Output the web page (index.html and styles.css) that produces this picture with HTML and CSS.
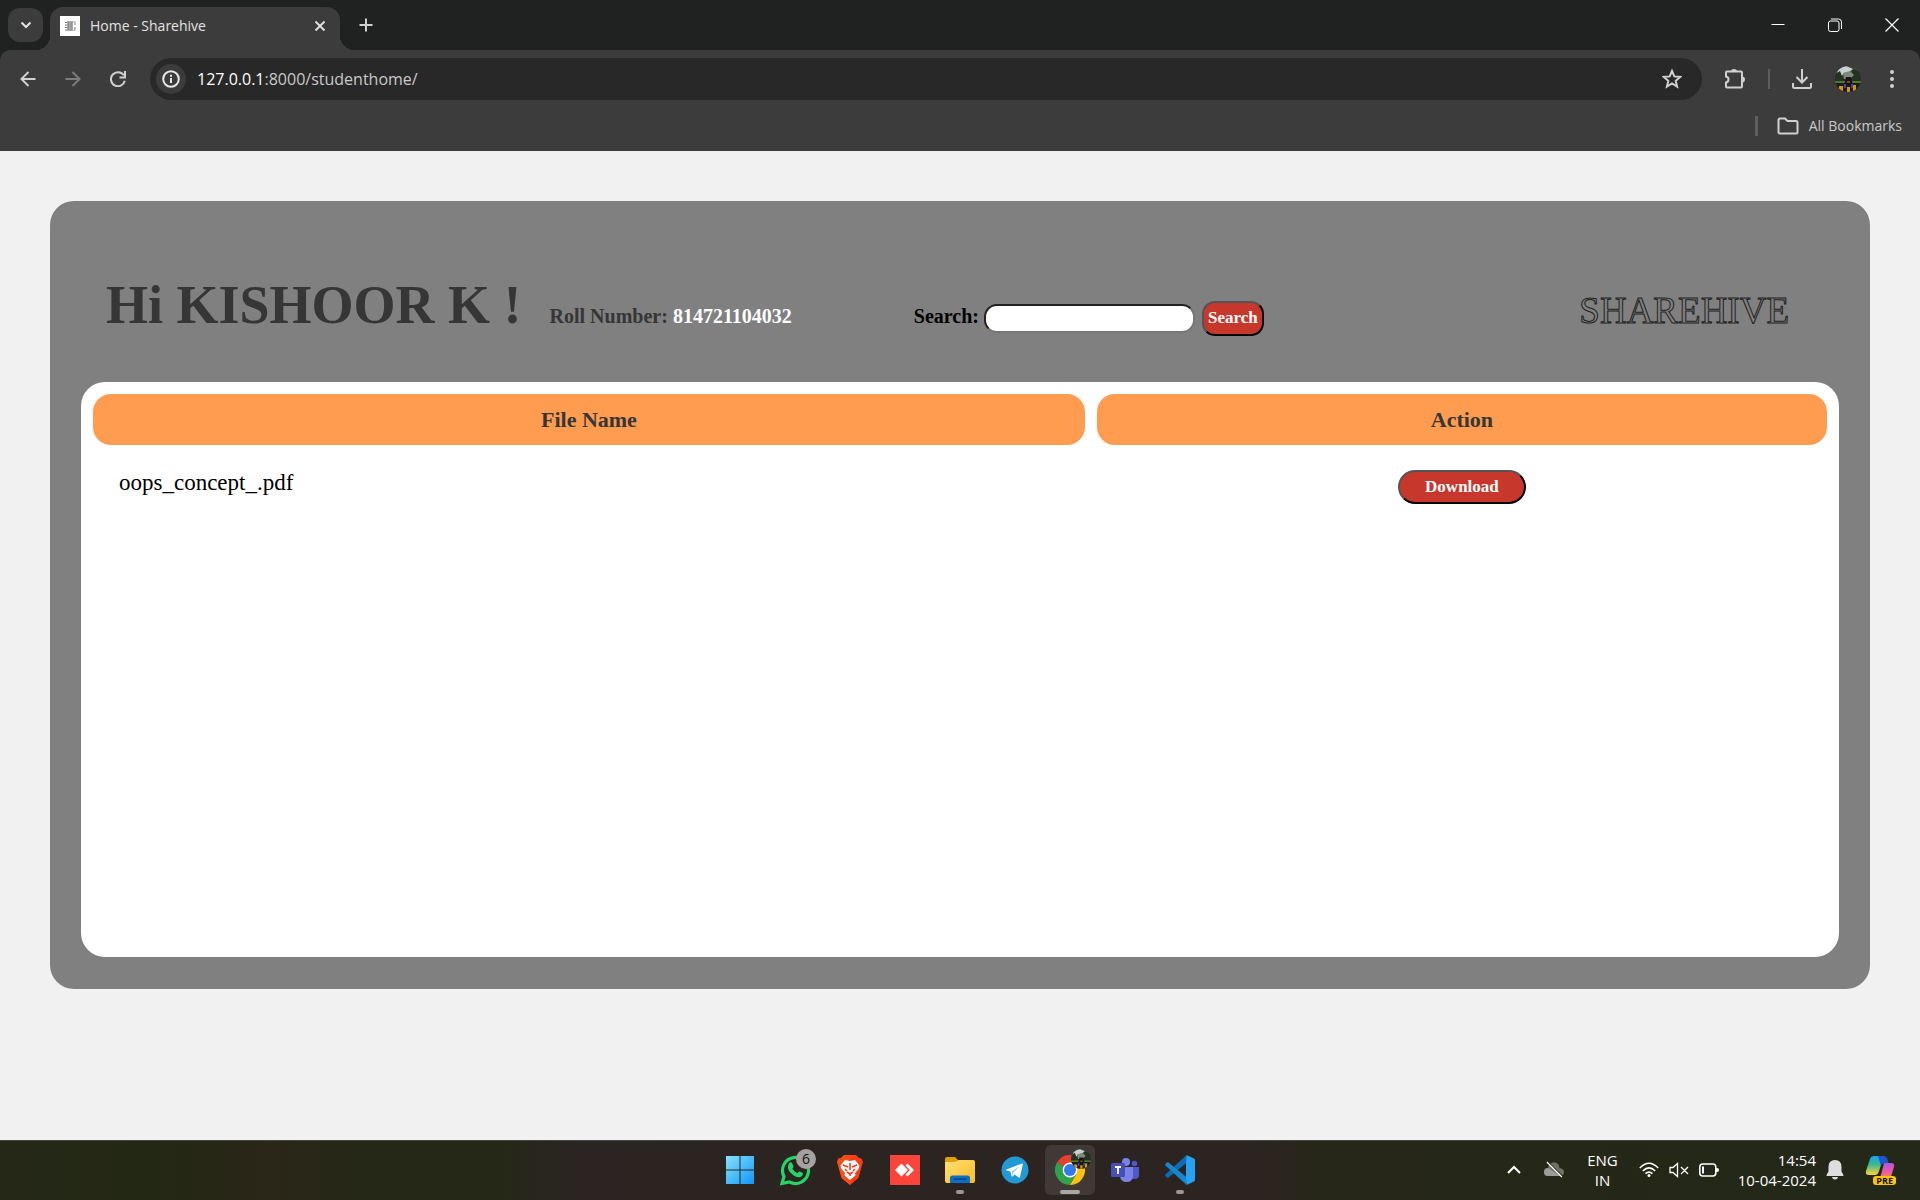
FILE: index.html
```html
<!DOCTYPE html>
<html lang="en">
<head>
<meta charset="utf-8">
<title>Home - Sharehive</title>
<link rel="stylesheet" href="styles.css">
</head>
<body>
<svg class="defs" width="0" height="0" aria-hidden="true">
  <defs>
    <symbol id="avatar" viewBox="0 0 26 26">
      <clipPath id="avatar-clip"><circle cx="13" cy="13" r="13"/></clipPath>
      <g clip-path="url(#avatar-clip)">
        <path fill="#3d4b38" d="M0 0h26v26H0z"/>
        <path fill="#c9d0d2" d="M3 2l8-2 7 3-4 3-5 1-3 4-5 1z"/>
        <path fill="#24331f" d="M0 8l5-3 2 5 5-1 1 6H0zM18 3l8 3v10h-9l-2-6z"/>
        <path fill="#7d8a7c" d="M8 7l7-2 4 4-4 4H9z"/>
        <path fill="#4f7a2c" d="M0 15h26v2H0z"/>
        <path fill="#1d1c22" d="M0 17h26v9H0z"/>
        <path fill="#17151a" d="M11 11h5l2 9H9z"/>
        <path fill="#90443a" d="M12 15h3v2h-3z"/>
        <path fill="#dc9210" d="M4 20h4v6H4zM12 21h3v5h-3zM18 19h3v6h-3z"/>
        <path fill="#374c9b" d="M9 18h2v4H9zM16 18h2v4h-2z"/>
      </g>
    </symbol>
  </defs>
</svg>

<header class="browser">
  <div class="tabstrip">
    <button class="tab-search" aria-label="Search tabs"><svg width="12" height="8" viewBox="0 0 12 8"><path d="M1.500 1.500L6 6l4.500-4.500" fill="none" stroke="#e3e3e3" stroke-width="2"/></svg></button>
    <div class="tab">
      <svg width="20" height="20" viewBox="0 0 20 20"><path fill="#fff" d="M0 0h20v20H0z"/><path fill="#aaa" d="M7 5h6v10H7z"/><path d="M5 6.500h2M5 9h2M5 11.500h2M5 14h2M13.500 6h2M13.500 14h2M15 7v2M15 11v2" stroke="#777" stroke-width="1"/><path d="M8.500 6v8M11 6v8" stroke="#888"/></svg>
      <span class="tab-title">Home - Sharehive</span>
      <button class="plain" aria-label="Close tab"><svg width="12" height="12" viewBox="0 0 12 12"><path d="M1.500 1.500l9 9M10.500 1.500l-9 9" stroke="#e3e3e3" stroke-width="1.800"/></svg></button>
    </div>
    <button class="plain new-tab" aria-label="New tab"><svg width="14" height="14" viewBox="0 0 14 14"><path d="M7 .5v13M.5 7h13" stroke="#d0d0d0" stroke-width="2"/></svg></button>
    <div class="window-controls">
      <button aria-label="Minimize"><svg width="14" height="14" viewBox="0 0 14 14"><path d="M.5 6.500h13" stroke="#fff"/></svg></button>
      <button aria-label="Restore"><svg width="14" height="14" viewBox="0 0 14 14" fill="none" stroke="#fff"><rect x=".5" y="3" width="10.500" height="10.500" rx="2"/><path d="M3 1h7.500a3 3 0 0 1 3 3v7"/></svg></button>
      <button aria-label="Close"><svg width="14" height="14" viewBox="0 0 14 14"><path d="M.5.5l13 13M13.500.5l-13 13" stroke="#fff" stroke-width="1.200"/></svg></button>
    </div>
  </div>
  <div class="toolbar">
    <div class="nav-row">
      <div class="nav-buttons">
        <button class="plain" aria-label="Back"><svg width="16" height="16" viewBox="0 0 16 16"><path d="M15.500 8H2M8.500 1L1.500 8l7 7" fill="none" stroke="#d0d0d0" stroke-width="2"/></svg></button>
        <button class="plain" aria-label="Forward" disabled><svg width="16" height="16" viewBox="0 0 16 16"><path d="M.5 8H14M7.500 1l7 7-7 7" fill="none" stroke="#7c7c7c" stroke-width="2"/></svg></button>
        <button class="plain" aria-label="Reload"><svg width="16" height="16" viewBox="0 0 16 16"><path d="M13.800 4.300A7 7 0 1 0 14.800 9.800" fill="none" stroke="#d0d0d0" stroke-width="2"/><path d="M15 0v6.500H9.500" fill="none" stroke="#d0d0d0" stroke-width="2"/></svg></button>
      </div>
      <div class="omnibox">
        <button class="site-info" aria-label="Site information"><svg width="18" height="18" viewBox="0 0 18 18"><circle cx="9" cy="9" r="7.800" fill="none" stroke="#e8e8e8" stroke-width="2"/><path d="M9 8v5M9 4.800v2" stroke="#e8e8e8" stroke-width="2"/></svg></button>
        <span class="url">127.0.0.1<span class="url-rest">:8000/studenthome/</span></span>
        <button class="plain" aria-label="Bookmark this tab"><svg width="20" height="20" viewBox="0 0 20 20"><path d="M10 1.900l2.300 5.500 5.900.5-4.500 3.900 1.400 5.800-5.100-3.100-5.100 3.100 1.400-5.800L1.800 7.900l5.900-.5z" fill="none" stroke="#d0d0d0" stroke-width="2"/></svg></button>
      </div>
      <div class="actions">
        <button class="plain" aria-label="Extensions"><svg width="22" height="22" viewBox="0 0 22 22"><path d="M2 4.500q0-1 1-1h14q1 0 1 1v14q0 1-1 1H3q-1 0-1-1v-4q2.500-.5 2.500-3T2 8.500z" fill="none" stroke="#d0d0d0" stroke-width="2"/><path fill="#d0d0d0" d="M7 3.500q0-2.500 3-2.500t3 2.500zM18 8.500q3 0 3 3t-3 3z"/></svg></button>
        <span class="divider"></span>
        <button class="plain" aria-label="Downloads"><svg width="20" height="20" viewBox="0 0 20 20"><path d="M10 0v13M4.500 8l5.500 5.500L15.500 8M1 14v3.500q0 1.500 1.500 1.500h15q1.500 0 1.500-1.500V14" fill="none" stroke="#d0d0d0" stroke-width="2"/></svg></button>
        <button class="plain" aria-label="Profile"><svg width="26" height="26"><use href="#avatar"/></svg></button>
        <button class="plain menu" aria-label="Menu"><svg width="4" height="18" viewBox="0 0 4 18" fill="#d0d0d0"><circle cx="2" cy="2" r="2"/><circle cx="2" cy="9" r="2"/><circle cx="2" cy="16" r="2"/></svg></button>
      </div>
    </div>
    <div class="bookmarks">
      <span class="divider thick"></span>
      <button class="plain all-bookmarks"><svg width="22" height="18" viewBox="0 0 22 18"><path d="M1.500 3q0-1.500 1.500-1.500h5l2.500 2.500H19q1.500 0 1.500 1.500V15q0 1.500-1.500 1.500H3q-1.500 0-1.500-1.500z" fill="none" stroke="#d0d0d0" stroke-width="2"/></svg>All Bookmarks</button>
    </div>
  </div>
</header>

<main class="page">
  <section class="card">
    <div class="card-head">
      <h1>Hi KISHOOR K !</h1>
      <p class="roll">Roll Number: <span>814721104032</span></p>
      <form class="search">
        <label for="q">Search:</label>
        <input id="q" type="text">
        <button class="red" type="button">Search</button>
      </form>
      <div class="logo">SHAREHIVE</div>
    </div>
    <div class="panel">
      <table>
        <thead><tr><th class="name-col">File Name</th><th>Action</th></tr></thead>
        <tbody><tr><td>oops_concept_.pdf</td><td class="action"><button class="red download">Download</button></td></tr></tbody>
      </table>
    </div>
  </section>
</main>

<footer class="taskbar">
  <nav class="apps">
    <button aria-label="Start"><svg width="30" height="30" viewBox="0 0 30 30"><defs><linearGradient id="win" gradientUnits="userSpaceOnUse" x1="0" y1="0" x2="30" y2="30"><stop stop-color="#8ce5ff"/><stop offset="1" stop-color="#0a93f5"/></linearGradient></defs><path fill="url(#win)" d="M1 1h13.500v13.500H1zM15.500 1H29v13.500H15.500zM1 15.500h13.500V29H1zM15.500 15.500H29V29H15.500z"/></svg></button>
    <button aria-label="WhatsApp"><svg width="32" height="32" viewBox="0 0 32 32"><path d="M3 29.500l2-7A13 13 0 1 1 10.500 28z" fill="none" stroke="#25d366" stroke-width="3.200"/><path d="M10 9.500q1.500-2 3-.5l1.500 3.300q.3 1-1.200 2.300 1.800 3.200 5 4.600 1.700-2 2.500-1.700l3 1.600q1 1-.8 3-3 2.800-8.300-.7Q9.500 17.800 9 14q-.3-2.500 1-4.500z" fill="#25d366"/></svg><span class="badge">6</span></button>
    <button aria-label="Brave"><svg width="26" height="30" viewBox="0 0 26 30"><path fill="#fb3b13" d="M7 0h12l3 3 2.500.5L26 7l-1 3-3.500 13L13 30l-8.500-7L1 10 0 7l1.500-3.500L4 3z"/><path fill="#ff5a1a" d="M7 0h6v30l-8.500-7L1 10 0 7l1.500-3.500L4 3z" opacity=".6"/><path fill="#fff" d="M8 5l5 1 5-1 4.500 5.500-1 3.500-3.500 4 .5 2.500L13 25l-5.500-4.500.5-2.500-3.500-4-1-3.500z"/><path d="M6 10l5 2M20 10l-5 2M13 8v7M10 17l3 2 3-2M8 14l2 2M18 14l-2 2M13 19v2" stroke="#fb3b13" stroke-width="1.600" fill="none"/></svg></button>
    <button aria-label="AnyDesk"><svg width="30" height="30" viewBox="0 0 30 30"><path fill="#fb443a" d="M0 0h30v30H0z"/><path fill="#fff" d="M5 15l6.500-6.500L18 15l-6.500 6.500zM15.500 10.500l2-2L24 15l-6.500 6.500-2-2L20 15z"/></svg></button>
    <button class="running" aria-label="File Explorer"><svg width="32" height="28" viewBox="0 0 32 28"><defs><linearGradient id="fold" x2="1" y2="1"><stop stop-color="#ffe07a"/><stop offset="1" stop-color="#fcbc25"/></linearGradient></defs><path fill="#e0a008" d="M1 3q0-2 2-2h8l4 4h8v8H1z"/><path fill="url(#fold)" d="M1 6h10l4-2h14q2 0 2 2v19q0 2-2 2H3q-2 0-2-2z"/><path fill="#0b6fc4" d="M6 27v-5q0-2.500 2.500-2.500h15Q26 19.500 26 22v5z"/><path d="M10 23h12" stroke="#07437e" stroke-width="1.500"/></svg></button>
    <button aria-label="Telegram"><svg width="28" height="28" viewBox="0 0 28 28"><circle cx="14" cy="14" r="13.500" fill="#2199d4"/><path fill="#fff" d="M5.500 13.500L21 7.500q1-.2.800 1L19 21q-.3 1-1.300.5l-4-3-2.200 2q-.6.500-.9-.5l-1.300-4.500-3.800-1q-1-.4 0-1z"/><path fill="#9bcbe8" d="M10.500 15.500l7.800-5-6.300 6.500-.8 3.500z"/></svg></button>
    <button class="running active" aria-label="Google Chrome"><svg width="30" height="30" viewBox="0 0 30 30"><path fill="#e8402f" d="M15 15L2 7.500A15 15 0 0 1 28 7.500z"/><path fill="#2fa24c" d="M15 15L2 7.500A15 15 0 0 0 15 30l6.500-11z"/><path fill="#fdc20f" d="M15 15V7.500h13A15 15 0 0 1 15 30l6.500-11z"/><circle cx="15" cy="15" r="7.400" fill="#fff"/><circle cx="15" cy="15" r="6" fill="#3079ee"/></svg><svg class="profile-badge" width="20" height="20"><use href="#avatar"/></svg></button>
    <button aria-label="Teams"><svg width="28" height="26" viewBox="0 0 28 26"><circle cx="15" cy="5" r="4" fill="#7b83eb"/><circle cx="23.500" cy="6.500" r="2.800" fill="#5059c9"/><path fill="#5059c9" d="M19 10h9v8q0 4-4.500 4T19 18z"/><path fill="#7b83eb" d="M9 10h13v9q-.5 6-6.500 6T9 19z"/><rect x="0" y="6" width="14" height="14" rx="1.500" fill="#464eb8"/><path d="M4 10h6M7 10v7" stroke="#fff" stroke-width="1.800"/></svg></button>
    <button class="running" aria-label="Visual Studio Code"><svg width="30" height="30" viewBox="0 0 30 30"><path fill="#0b6db5" d="M22 7.500L3.500 22.500q-1 .6-1.700-.2L.5 21q-.7-1 .2-1.800L21 .5z"/><path fill="#1686cf" d="M22 22.500L3.500 7.500q-1-.6-1.700.2L.5 9q-.7 1 .2 1.800L21 29.500z"/><path fill="#27a1f2" d="M21.500 0L29 3.500q1 .5 1 1.500v20q0 1-1 1.500L21.500 30l-.5-6V6z"/></svg></button>
  </nav>
  <div class="tray">
    <svg class="chevron" width="14" height="10" viewBox="0 0 14 10"><path d="M1 8l6-6 6 6" fill="none" stroke="#fff" stroke-width="2"/></svg>
    <svg class="cloud" width="22" height="18" viewBox="0 0 22 18"><path fill="#6f7169" d="M5 15q-4 0-4-4t4-4q1-5.500 6-5.500T16.500 7Q21 7.500 21 11t-4 4z"/><path fill="#9c9d97" d="M5 15q-4 0-4-4t4.500-4L17 15z"/><path d="M4 1l15 15" stroke="#fff" stroke-width="1.500"/><path d="M5.500 1l15 15" stroke="#252817" stroke-width="1"/></svg>
    <div class="lang">ENG<br>IN</div>
    <svg width="20" height="16" viewBox="0 0 20 16" fill="none" stroke="#fff" stroke-width="1.600"><path d="M.8 6q9.200-9.500 18.400 0M3.800 9q6.200-6.200 12.400 0M6.500 11.700q3.500-3 7 0"/><circle cx="10" cy="13.500" r="1.500" fill="#fff" stroke="none"/></svg>
    <svg width="20" height="16" viewBox="0 0 20 16" fill="none" stroke="#fff" stroke-width="1.300"><path d="M1 5.500h3L8.500 1.500v13L4 10.500H1zM12 5l7 7M19 5l-7 7"/></svg>
    <svg class="battery" width="20" height="14" viewBox="0 0 20 14"><rect x=".8" y="1" width="16" height="12" rx="3" fill="none" stroke="#fff" stroke-width="1.600"/><path fill="#fff" d="M3 3.500h2v7H3zM17 5h1q2 0 2 2t-2 2h-1z"/></svg>
    <div class="clock">14:54<br>10-04-2024</div>
    <svg class="bell" width="18" height="20" viewBox="0 0 18 20"><path fill="#dedede" d="M9 0q6.500 0 6.500 7v4.500l2 3.500q.2 1-.8 1H1.300q-1 0-.8-1l2-3.500V7Q2.500 0 9 0zM6 17h6q-.5 2.500-3 2.500T6 17z"/></svg>
    <div class="copilot"><svg width="30" height="30" viewBox="0 0 30 30"><defs><linearGradient id="cp1" x2="0" y2="1"><stop stop-color="#16a3ef"/><stop offset=".45" stop-color="#3cb78f"/><stop offset="1" stop-color="#ffd43a"/></linearGradient><linearGradient id="cp2" x2="0" y2="1"><stop stop-color="#a957e8"/><stop offset=".5" stop-color="#ec56a5"/><stop offset="1" stop-color="#ff8a5c"/></linearGradient></defs><path fill="url(#cp1)" d="M9 1h10l-5 15q-1 4-4 4H4q-4 0-3-4L5 4q1-3 4-3z"/><path fill="#1c55cf" d="M13 1h6q2.500 0 3 2.500L23.500 8H20q-3 0-4 3z"/><path fill="url(#cp2)" d="M19 8h7q4 0 3 4l-2.500 8q-1 4-4 4H12q3-1 4-4z"/></svg><span>PRE</span></div>
  </div>
</footer>
</body>
</html>
```
FILE: styles.css
```css
* { box-sizing: border-box; }

body {
  margin: 0;
  min-height: 100vh;
  display: flex;
  flex-direction: column;
  background: #f1f1f1;
  font-family: "Liberation Serif", "Times New Roman", serif;
}

svg { display: block; flex: none; }
.defs { position: absolute; }

button { font-family: inherit; cursor: pointer; }

.plain,
.tab-search,
.site-info,
.window-controls button,
.apps button {
  display: flex;
  align-items: center;
  justify-content: center;
  padding: 0;
  border: 0;
  background: none;
  color: inherit;
}

/* Browser frame */
.browser {
  background: #202221;
  color: #e3e3e3;
  font-family: "Open Sans", "Noto Sans", sans-serif;
}

.tabstrip {
  display: flex;
  align-items: center;
  height: 50px;
  padding-left: 8px;
}

.tabstrip .tab-search {
  width: 35px;
  height: 34px;
  border-radius: 12px;
  background: #3c3c3c;
}

.tab {
  position: relative;
  align-self: flex-end;
  display: flex;
  align-items: center;
  gap: 10px;
  width: 290px;
  height: 43px;
  margin-left: 7px;
  padding: 0 14px 6px 10px;
  border-radius: 13px 13px 0 0;
  background: #3c3c3c;
}

.tab::before,
.tab::after {
  content: "";
  position: absolute;
  bottom: 0;
  width: 14px;
  height: 14px;
}
.tab::before { right: 100%; background: radial-gradient(circle at 0 0, transparent 14px, #3c3c3c 14px); }
.tab::after { left: 100%; background: radial-gradient(circle at 100% 0, transparent 14px, #3c3c3c 14px); }

.tab-title { flex: 1; font-size: 14px; }
.new-tab { margin-left: 19px; }

.window-controls { display: flex; margin-left: auto; }
.window-controls button { width: 57px; height: 48px; }

.toolbar {
  border-radius: 10px 10px 0 0;
  background: #3c3c3c;
}

.nav-row {
  display: flex;
  align-items: center;
  padding-top: 8px;
}

.nav-buttons { display: flex; gap: 29px; padding: 0 24px 0 20px; }

.omnibox {
  flex: 1;
  display: flex;
  align-items: center;
  height: 42px;
  padding: 0 20px 0 6px;
  border-radius: 21px;
  background: #282828;
}

.omnibox .site-info {
  width: 30px;
  height: 30px;
  border-radius: 50%;
  background: #3c3c3c;
}

.url { flex: 1; margin-left: 11px; font-size: 16px; color: #fff; }
.url-rest { color: #c9c9c9; }

.actions { display: flex; align-items: center; gap: 23px; padding: 0 26px 0 22px; }
.actions .divider { margin: 0 -1px; }
.actions .menu { margin-left: 6px; }

.divider { width: 2px; height: 20px; background: #5e5e5e; }
.divider.thick { width: 3px; }

.bookmarks {
  display: flex;
  align-items: center;
  justify-content: flex-end;
  gap: 19px;
  height: 51px;
  padding-right: 18px;
}

.all-bookmarks { gap: 10px; font-size: 14px; color: #c9c9c9; }

/* Page */
.page { flex: 1; padding: 50px; }

.card {
  padding: 0 31px 32px;
  border-radius: 24px;
  background: #808080;
}

.card-head {
  display: flex;
  align-items: baseline;
  padding: 73px 50px 46px 25px;
}

h1 {
  margin: 0 28px 0 0;
  font-size: 54px;
  color: #363636;
}

.roll {
  margin: 0;
  font-size: 20px;
  font-weight: bold;
  color: #363636;
}
.roll span { color: #fff; }

.search {
  display: flex;
  align-items: baseline;
  margin-left: 122px;
  font-size: 20px;
  font-weight: bold;
}

.search input {
  width: 211px;
  height: 29px;
  margin: 0 7px 0 5px;
  border: 2px inset #767676;
  border-radius: 13px;
  background: #fff;
  font: 17px "Liberation Serif", serif;
}

.red {
  height: 35px;
  padding: 0 4px;
  border: 2px outset #000;
  border-radius: 13px;
  background: #c8372b;
  color: #fff;
  font-size: 17px;
  font-weight: bold;
}

.logo {
  margin-left: auto;
  font-size: 37px;
  color: #808080;
  -webkit-text-stroke: 1px #222;
}

.panel {
  min-height: 575px;
  border-radius: 24px;
  background: #fff;
}

table {
  width: 100%;
  border-spacing: 12px;
  font-size: 23px;
}

th {
  height: 51px;
  padding: 0;
  border-radius: 18px;
  background: #ff9c50;
  color: #363636;
  font-size: 22px;
}

.name-col { width: 57.6%; }

td {
  padding: 13px 26px;
  vertical-align: top;
}

.action { text-align: center; }

.download {
  height: 34px;
  padding: 0 25px;
  border-radius: 17px;
}

/* Taskbar */
.taskbar {
  display: grid;
  grid-template-columns: 1fr auto 1fr;
  align-items: center;
  height: 60px;
  padding-bottom: 2px;
  border-top: 1px solid #464642;
  background: linear-gradient(90deg, #252817 0%, #232814 8%, #2a2618 14%, #252817 19%, #252817 26%, #2a2422 30%, #2c2420 60%, #2c2420 65%, #262718 69%, #232819 100%);
  color: #fff;
  font-family: "Open Sans", "Noto Sans", sans-serif;
}

.apps { grid-column: 2; display: flex; gap: 5px; }

.apps button {
  position: relative;
  width: 50px;
  height: 50px;
  border-radius: 6px;
}

.apps .running::after {
  content: "";
  position: absolute;
  bottom: 1px;
  width: 8px;
  height: 4px;
  border-radius: 2px;
  background: #9b9693;
}

.apps .active { background: #403936; }
.apps .active::after { width: 20px; background: #aaa6a3; }

.badge {
  position: absolute;
  top: 4px;
  right: 4px;
  width: 20px;
  height: 20px;
  border-radius: 50%;
  background: #a5a1a0;
  color: #111;
  font-size: 14px;
  line-height: 20px;
}

.profile-badge { position: absolute; top: 4px; right: 4px; }

.tray {
  display: flex;
  align-items: center;
  justify-content: flex-end;
  gap: 10px;
  padding-right: 25px;
  font-size: 15px;
  line-height: 20px;
}

.chevron { margin-right: 12px; }
.cloud { margin-right: 12px; }
.lang { margin-right: 11px; text-align: center; }
.battery { margin-right: 9px; }
.clock { text-align: right; }
.bell { margin-right: 11px; }

.copilot { position: relative; }
.copilot span {
  position: absolute;
  right: -1px;
  bottom: 0;
  padding: 0 3px;
  border-radius: 3px;
  background: #ffc400;
  color: #111;
  font-size: 9px;
  font-weight: bold;
  line-height: 9px;
}
```
